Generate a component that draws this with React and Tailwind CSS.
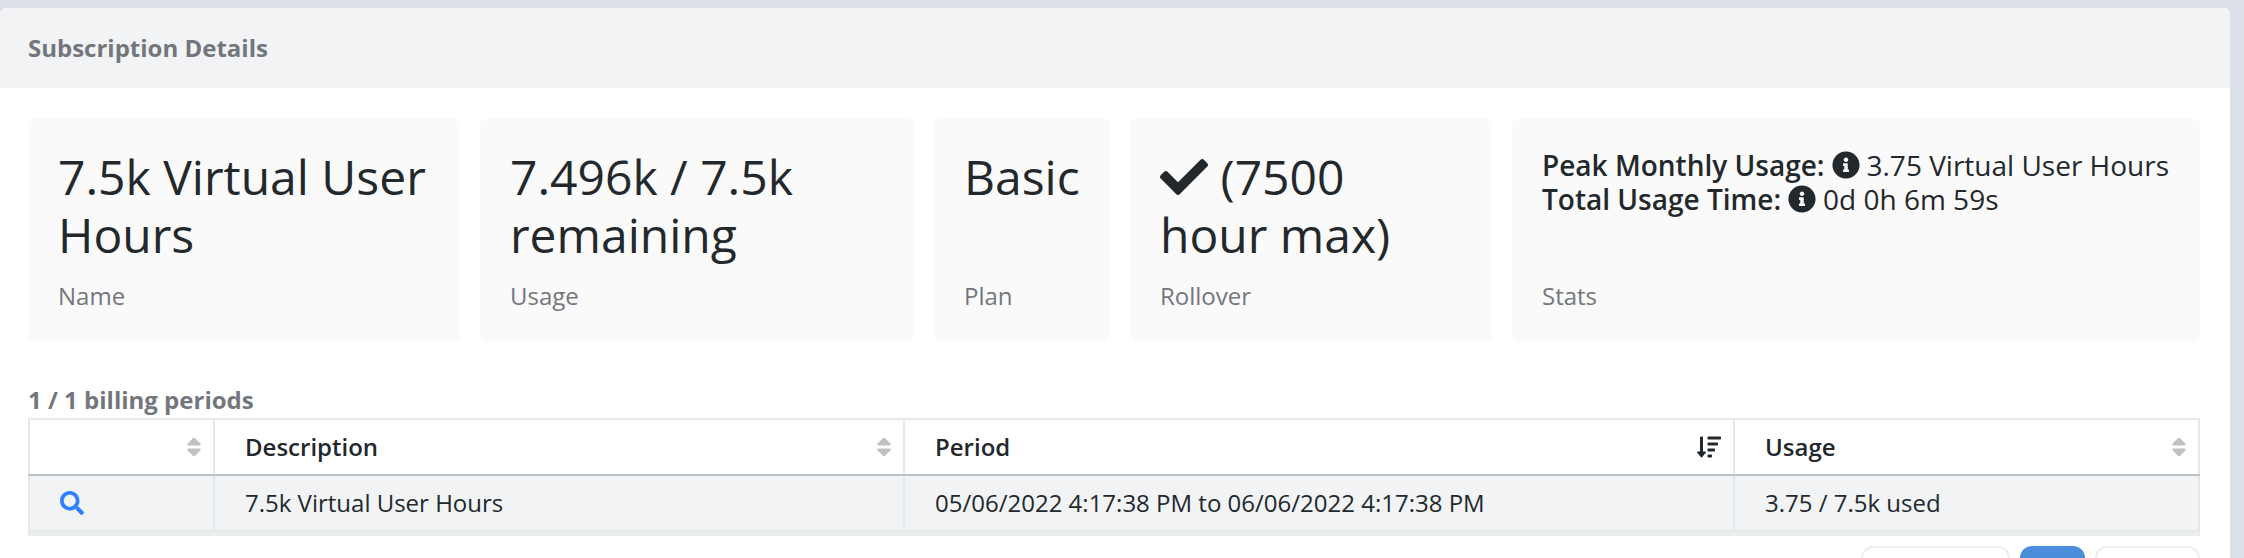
import React from "react";
import {
  FaCheck,
  FaInfoCircle,
  FaSearch,
  FaSort,
  FaSortAmountDown,
} from "react-icons/fa";

const StatCard = ({ label, children }) => (
  <div className="flex flex-col justify-between rounded-lg bg-[#fafafa] p-[30px]">
    {children}
    <div className="text-2xl leading-[34px] text-[#73777d]">{label}</div>
  </div>
);

const BigValue = ({ children }) => (
  <div className="mb-[15px] min-h-[116px] text-5xl leading-[58px]">
    {children}
  </div>
);

const StatLine = ({ title, value }) => (
  <div className="flex items-center gap-[7px] whitespace-nowrap">
    <strong className="font-semibold">{title}:</strong>
    <FaInfoCircle className="size-7 shrink-0" />
    <span>{value}</span>
  </div>
);

const columns = [
  { name: "", label: "Select", width: "w-[185px]" },
  { name: "Description", width: "w-[690px]" },
  { name: "Period", width: "w-[830px]", sorted: true },
  { name: "Usage", width: "w-auto" },
];

const renderHeader = ({ name, label, width, sorted }) => (
  <th
    key={label ?? name}
    aria-label={label}
    className={`${width} h-[56px] border-2 border-[#e4e7eb] border-b-[#b9c1c9] p-0 text-left font-semibold`}
  >
    <div className="flex items-center justify-between pr-3 pl-[30px]">
      <span>{name}</span>
      <button
        type="button"
        aria-label={`Sort by ${label ?? name}`}
        className={sorted ? "" : "-mr-[5px]"}
      >
        {sorted ? (
          <FaSortAmountDown className="size-6" />
        ) : (
          <FaSort className="size-6 text-[#c0c1c2]" />
        )}
      </button>
    </div>
  </th>
);

export default function App() {
  return (
    <div className="h-screen overflow-hidden bg-[#dbdfe7] pt-2 pr-[14px] font-['Open_Sans',sans-serif] text-[#23282c]">
      <section className="min-h-screen rounded-t-md bg-white">
        <header className="flex h-20 items-center rounded-t-md bg-[#f1f3f5] pl-7">
          <h1 className="text-2xl font-bold text-[#73777d]">
            Subscription Details
          </h1>
        </header>

        <div className="pt-[30px] pr-[30px] pl-7">
          <div className="grid grid-cols-[432fr_434fr_176fr_362fr_688fr] gap-5">
            <StatCard label="Name">
              <BigValue>7.5k Virtual User Hours</BigValue>
            </StatCard>
            <StatCard label="Usage">
              <BigValue>7.496k / 7.5k remaining</BigValue>
            </StatCard>
            <StatCard label="Plan">
              <BigValue>Basic</BigValue>
            </StatCard>
            <StatCard label="Rollover">
              <BigValue>
                <FaCheck className="inline size-12 align-[-6px]" /> (7500 hour
                max)
              </BigValue>
            </StatCard>
            <StatCard label="Stats">
              <div className="text-[28px] leading-[34px]">
                <StatLine
                  title="Peak Monthly Usage"
                  value="3.75 Virtual User Hours"
                />
                <StatLine title="Total Usage Time" value="0d 0h 6m 59s" />
              </div>
            </StatCard>
          </div>

          <table className="mt-10 w-full table-fixed border-collapse text-2xl leading-[34px]">
            <caption className="pb-px text-left font-bold text-[#73777d]">
              1 / 1 billing periods
            </caption>
            <thead>
              <tr>{columns.map(renderHeader)}</tr>
            </thead>
            <tbody>
              <tr className="bg-[#f1f3f5]">
                <td className="h-[56px] border-2 border-[#e4e7eb] pl-[30px]">
                  <button
                    type="button"
                    aria-label="View billing period"
                    className="block text-[#2f80ff]"
                  >
                    <FaSearch className="size-6" />
                  </button>
                </td>
                <td className="border-2 border-[#e4e7eb] pl-[30px]">
                  7.5k Virtual User Hours
                </td>
                <td className="border-2 border-[#e4e7eb] pl-[30px]">
                  05/06/2022 4:17:38 PM to 06/06/2022 4:17:38 PM
                </td>
                <td className="border-2 border-[#e4e7eb] pl-[30px]">
                  3.75 / 7.5k used
                </td>
              </tr>
            </tbody>
          </table>
          <div className="h-1 bg-[#ebecec]" />

          <nav className="mt-[10px] flex justify-end gap-[10px]">
            <button
              type="button"
              aria-label="Previous page"
              className="h-[60px] w-[149px] rounded-xl border-2 border-[#eeeeee]"
            />
            <button
              type="button"
              aria-label="Page 1"
              className="h-[60px] w-[65px] rounded-xl bg-[#4b8edb]"
            />
            <button
              type="button"
              aria-label="Next page"
              className="h-[60px] w-[105px] rounded-xl border-2 border-[#eeeeee]"
            />
          </nav>
        </div>
      </section>
    </div>
  );
}
